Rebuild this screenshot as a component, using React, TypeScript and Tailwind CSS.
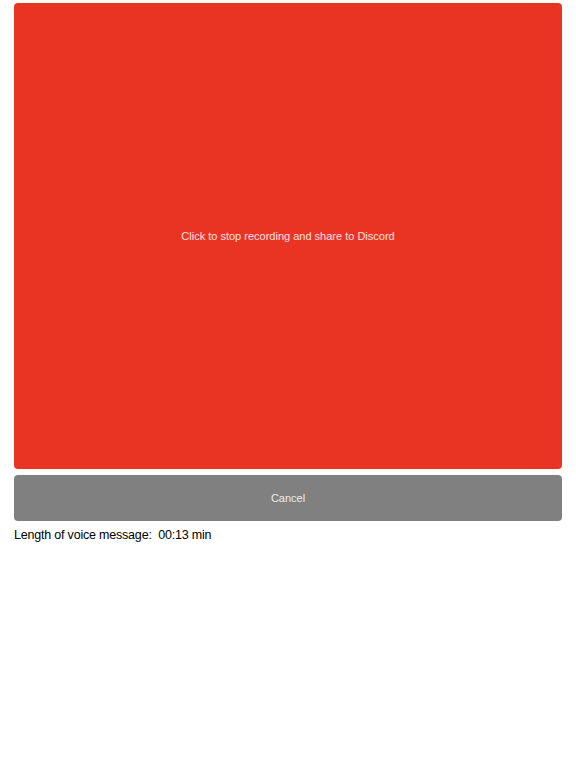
export default function App() {
  return (
    <div className="min-h-[768px] bg-white px-[14px] pt-[3px] font-['Helvetica_Neue','Liberation_Sans',Arial,sans-serif]">
      <button className="flex h-[466px] w-full items-center justify-center rounded-[4px] bg-[#e93424] text-[11px] text-white/85">
        Click to stop recording and share to Discord
      </button>
      <button className="mt-[6px] flex h-[46px] w-full items-center justify-center rounded-[4px] bg-[#808080] text-[11px] text-white/85">
        Cancel
      </button>
      <p className="mt-[6px] text-[12.5px] leading-[16px] tracking-[-0.2px] text-black">
        Length of voice message:&nbsp; 00:13 min
      </p>
    </div>
  )
}
